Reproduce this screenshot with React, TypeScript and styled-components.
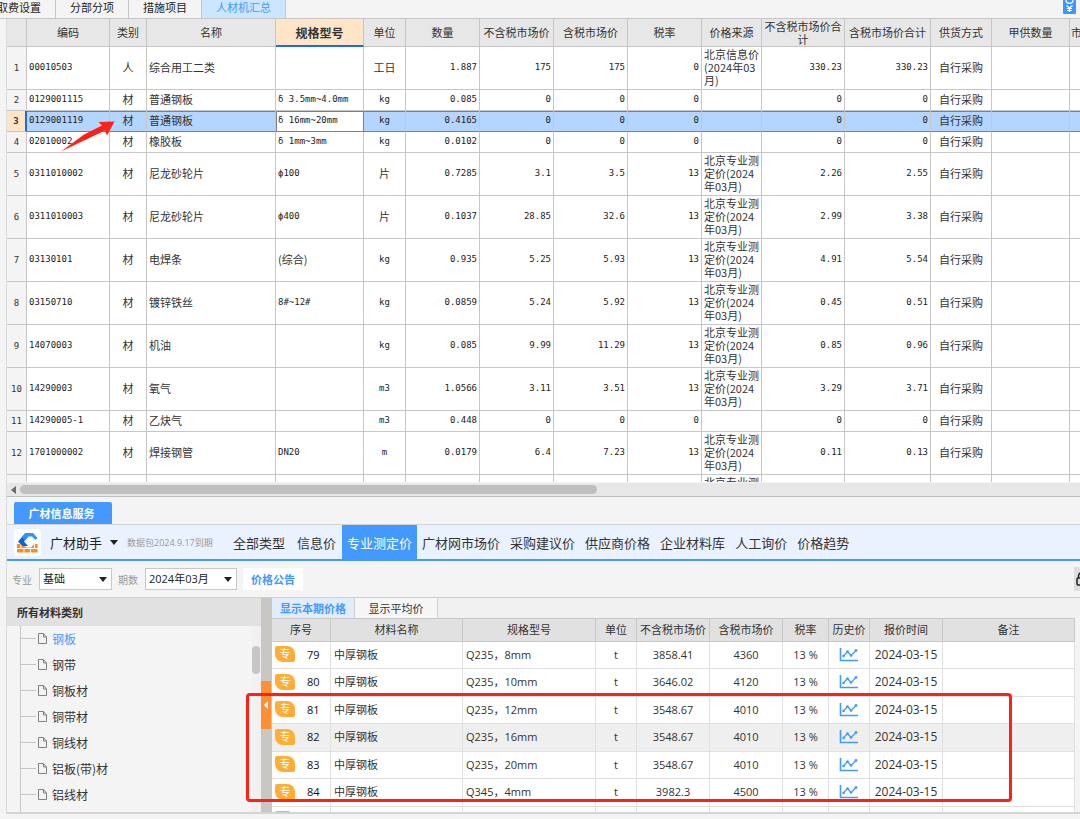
import React from 'react';
import styled, { createGlobalStyle, css } from 'styled-components';

const blue = '#4499ff';
const line = '#c6c6c6';
const song = '"Noto Sans CJK SC", sans-serif';
const ui = '"Open Sans", "Noto Sans CJK SC", sans-serif';

const GlobalStyle = createGlobalStyle`
  * { box-sizing: border-box; }
  html, body { margin: 0; background: #f4f4f4; }
  body { font-family: ${song}; font-size: 11px; line-height: 13px; color: #333; }
  button, select { font: inherit; color: inherit; margin: 0; }
  svg { flex: none; }
  table { border-collapse: separate; border-spacing: 0; table-layout: fixed; width: 100%; }
`;

const Page = styled.div`
  position: relative;
  display: flex;
  flex-direction: column;
  height: 100vh;
  overflow: hidden;
`;

/* ---------- top tabs ---------- */

const TopTabs = styled.nav`
  display: flex;
  justify-content: space-between;
  flex: none;
  height: 19px;
  overflow: hidden;
  border-bottom: 1px solid ${line};
`;
const TabGroup = styled.div`
  display: flex;
  margin-left: -17px;
`;
const TopTab = styled.button<{ $active?: boolean }>`
  width: ${(p) => (p.$active ? 84 : 73)}px;
  padding: 0 0 4px;
  border: 0;
  border-right: 1px solid ${line};
  background: ${(p) => (p.$active ? '#cce6ff' : 'transparent')};
  color: ${(p) => (p.$active ? blue : '#222')};
  white-space: nowrap;
  line-height: 14px;
`;

/* ---------- material sheet ---------- */

const SheetPane = styled.section`
  flex: none;
  margin-left: 6px;
  border-left: 1px solid #dcdcdc;
  border-bottom: 1px solid #bdbdbd;
`;
const SheetView = styled.div`
  height: 463px;
  overflow: hidden;
  background: #fff;
`;
const Head = styled.th<{ $current?: boolean; $left?: boolean }>`
  height: 28px;
  padding: 0 1px;
  border-right: 1px solid ${line};
  border-bottom: 1px solid ${line};
  background: #e7e7e7;
  font-weight: 400;
  line-height: 13px;
  overflow: hidden;
  text-align: ${(p) => (p.$left ? 'left' : 'center')};
  ${(p) =>
    p.$current &&
    css`
      background: #ffe5c8;
      border-bottom: 2px solid #1a6be8;
      font-weight: 700;
      font-size: 12px;
    `}
  &:last-child { border-right: 0; }
`;
const SheetRow = styled.tr<{ $tall?: boolean; $selected?: boolean }>`
  height: ${(p) => (p.$tall ? 43 : 21)}px;
  ${(p) =>
    p.$selected &&
    css`
      td {
        background: #b3d5ff;
        border-bottom-color: #7f7f7f;
        box-shadow: inset 0 1px #7f7f7f;
      }
    `}
`;
const Cell = styled.td<{ $align?: 'left' | 'center' | 'right'; $num?: boolean }>`
  padding: 0 2px 2px;
  border-right: 1px solid ${line};
  border-bottom: 1px solid ${line};
  text-align: ${(p) => p.$align ?? 'left'};
  white-space: nowrap;
  ${(p) =>
    p.$num &&
    css`
      font-family: "DejaVu Sans Mono", ${song};
      font-size: 9px;
      color: #222;
    `}
  &:last-child { border-right: 0; }
`;
const RowNo = styled.th<{ $selected?: boolean }>`
  padding: 0;
  border-right: 1px solid ${line};
  border-bottom: 1px solid ${line};
  background: #f4f4f4;
  font-family: "DejaVu Sans Mono", monospace;
  font-size: 9px;
  font-weight: 400;
  text-align: center;
  ${(p) =>
    p.$selected &&
    css`
      background: #ffe5c8;
      border-right: 2px solid #1a6be8;
      font-weight: 700;
    `}
`;
const SpecCell = styled(Cell)<{ $selected?: boolean }>`
  ${(p) =>
    p.$selected &&
    css`
      && {
        background: #fff;
        border-right-color: #7f7f7f;
        box-shadow: inset 1px 1px #7f7f7f;
      }
    `}
`;
const ScrollBar = styled.div`
  display: flex;
  align-items: center;
  gap: 4px;
  height: 14px;
  padding-left: 4px;
  border-top: 1px solid #f4f4f4;
  background: #e7e7e7;
`;
const ScrollThumb = styled.div`
  width: 54%;
  height: 9px;
  border-radius: 5px;
  background: #bfbfbf;
`;

/* ---------- service panel ---------- */

const Service = styled.section`
  flex: 1;
  min-height: 0;
  display: flex;
  flex-direction: column;
  margin-left: 6px;
  border-left: 1px solid #dcdcdc;
`;
const ServiceTabs = styled.div`
  flex: none;
  padding: 5px 7px 0;
  height: 28px;
  border-bottom: 1px solid #d2d2d2;
`;
const ServiceTab = styled.button`
  width: 98px;
  height: 22px;
  padding: 0 3px 0 0;
  border: 0;
  border-radius: 2px 2px 0 0;
  background: ${blue};
  color: #fff;
  font-weight: 700;
`;
const Toolbar = styled.div`
  flex: none;
  display: flex;
  align-items: center;
  height: 36px;
  padding-left: 7px;
  border-bottom: 2px solid ${blue};
  background: #eaf1ff;
  font-size: 13px;
  white-space: nowrap;
`;
const Logo = styled.span`
  display: flex;
  align-items: center;
  justify-content: center;
  width: 27px;
  height: 27px;
  border-radius: 4px;
  background: #fff;
`;
const Product = styled.button`
  display: flex;
  align-items: center;
  gap: 8px;
  padding: 0;
  margin-left: 9px;
  border: 0;
  background: none;
  color: #222;
`;
const Expiry = styled.span`
  width: 100px;
  margin-left: 9px;
  font-family: ${ui};
  font-size: 9px;
  color: #9a9a9a;
`;
const Nav = styled.nav`
  display: flex;
  align-self: stretch;
`;
const NavItem = styled.button<{ $active?: boolean; $wide?: boolean }>`
  padding: 0 ${(p) => (p.$wide ? 6 : 5)}px;
  border: 0;
  background: ${(p) => (p.$active ? blue : 'none')};
  color: ${(p) => (p.$active ? '#fff' : '#333')};
`;
const Filters = styled.div`
  flex: none;
  display: flex;
  align-items: center;
  height: 36px;
  padding-left: 5px;
`;
const FieldLabel = styled.label`
  width: 27px;
  font-size: 10px;
  color: #999;
`;
const SelectWrap = styled.span<{ $w: number }>`
  display: flex;
  align-items: center;
  width: ${(p) => p.$w}px;
  height: 22px;
  margin-right: 6px;
  padding-right: 4px;
  border: 1px solid #c8c8c8;
  background: #fff;
  select {
    flex: 1;
    min-width: 0;
    appearance: none;
    border: 0;
    padding: 0 0 0 3px;
    background: none;
    font-family: ${ui};
    line-height: 16px;
    color: #222;
  }
`;
const Notice = styled.button`
  width: 60px;
  height: 22px;
  padding: 0;
  border: 0;
  background: #fff;
  color: ${blue};
  font-weight: 700;
`;
const LockButton = styled.button`
  display: flex;
  align-items: center;
  width: 6px;
  height: 24px;
  margin-left: auto;
  padding: 0 0 0 2px;
  border: 0;
  background: #dedede;
  overflow: hidden;
`;

const Split = styled.div`
  flex: 1;
  min-height: 0;
  display: flex;
  border-top: 1px solid #cfcfcf;
  border-bottom: 2px solid #d4d4d4;
`;
const Tree = styled.aside`
  flex: none;
  width: 254px;
  display: flex;
  flex-direction: column;
  overflow: hidden;
`;
const TreeTitle = styled.h2`
  flex: none;
  height: 28px;
  margin: 0;
  padding-left: 10px;
  background: #e1e1e1;
  font-size: 11px;
  line-height: 28px;
`;
const TreeBody = styled.div`
  flex: 1;
  min-height: 0;
  display: flex;
  justify-content: space-between;
`;
const TreeList = styled.ul`
  margin: 0 0 0 13px;
  padding: 0;
  border-left: 1px solid ${line};
  list-style: none;
`;
const TreeItem = styled.li<{ $active?: boolean }>`
  display: flex;
  align-items: center;
  height: 26px;
  padding-bottom: 1px;
  font-size: 12px;
  white-space: nowrap;
  color: ${(p) => (p.$active ? blue : '#333')};
  &::before {
    content: "";
    width: 15px;
    margin-right: 1px;
    border-top: 1px solid ${line};
  }
  svg { margin-right: 4px; }
`;
const TreeScroll = styled.div`
  width: 9px;
  padding-top: 20px;
  background: #f1f1f1;
  &::before {
    content: "";
    display: block;
    width: 8px;
    height: 28px;
    border-radius: 4px;
    background: #c6c6c6;
  }
`;
const Splitter = styled.div`
  flex: none;
  width: 11px;
  padding-top: 83px;
  background: #c9c7c4;
`;
const Collapse = styled.button`
  display: flex;
  align-items: center;
  justify-content: center;
  width: 10px;
  height: 48px;
  padding: 0;
  border: 0;
  background: #ff8f33;
`;
const Prices = styled.div`
  flex: 1;
  min-width: 0;
  padding-right: 5px;
  overflow: hidden;
  font-family: ${ui};
`;
const PriceTabs = styled.div`
  display: flex;
  height: 20px;
  margin-right: -5px;
  background: #f0f0f0;
`;
const PriceTab = styled.button<{ $active?: boolean }>`
  width: 83px;
  padding: 0;
  border: 0;
  border-right: 1px solid #d0d0d0;
  background: ${(p) => (p.$active ? '#e1edfd' : '#f6f6f6')};
  color: ${(p) => (p.$active ? blue : '#333')};
  font-weight: ${(p) => (p.$active ? 700 : 400)};
`;
const PriceHead = styled.th`
  height: 24px;
  padding: 0 0 2px;
  border: solid #c8c8c8;
  border-width: 1px 1px 1px 0;
  background: #e1e1e1;
  font-weight: 400;
  white-space: nowrap;
`;
const PriceRow = styled.tr<{ $hover?: boolean }>`
  height: 27px;
  background: ${(p) => (p.$hover ? '#efefef' : '#fff')};
  &:nth-child(even) { height: 28px; }
`;
const PriceCell = styled.td<{ $left?: boolean; $date?: boolean }>`
  padding: 0 3px 2px;
  border-right: 1px solid #e0e0e0;
  border-bottom: 1px solid #e0e0e0;
  text-align: ${(p) => (p.$left ? 'left' : 'center')};
  font-size: ${(p) => (p.$date ? 12 : 11)}px;
  white-space: nowrap;
  svg { display: block; margin: 0 auto; }
`;
const Seq = styled.span`
  display: flex;
  align-items: center;
  gap: 12px;
  color: #111;
`;
const Badge = styled.span`
  width: 20px;
  height: 16px;
  border-radius: 2px 8px 2px 8px;
  background: #ffae35;
  color: #fff;
  font-size: 11px;
  line-height: 15px;
  text-align: center;
`;
const StatusBar = styled.footer`
  flex: none;
  height: 5px;
`;

/* ---------- annotations over the window ---------- */

const RedBox = styled.div`
  position: absolute;
  left: 246px;
  right: 68px;
  top: 693px;
  height: 109px;
  border: 3px solid #ff2115;
  border-radius: 4px;
  pointer-events: none;
`;
const RedArrow = styled.svg`
  position: absolute;
  left: 60px;
  top: 119px;
  pointer-events: none;
`;

/* ---------- drawings ---------- */

const Down = () => (
  <svg width="8" height="5" viewBox="0 0 8 5" aria-hidden="true"><path d="M0 0h8L4 5z" fill="#222" /></svg>
);
const FileIcon = () => (
  <svg width="11" height="13" viewBox="0 0 11 13" fill="none" stroke="#808080" aria-hidden="true">
    <path d="M1.500 1.500h5l3 3.500v6.500h-8z" /><path d="M6.500 1.500V5h3" />
  </svg>
);
const ChartIcon = () => (
  <svg width="20" height="15" viewBox="0 0 20 15" fill="none" stroke={blue} aria-hidden="true">
    <path d="M1.500 1v12.500H19" strokeWidth="1.600" />
    <path d="M4.500 9L8.500 4.500 12 8.500 17 3.500" strokeWidth="1.300" />
    <g fill={blue} stroke="none">
      <circle cx="4.500" cy="9" r="1.300" /><circle cx="8.500" cy="4.500" r="1.300" />
      <circle cx="12" cy="8.500" r="1.300" /><circle cx="17" cy="3.500" r="1.400" />
    </g>
  </svg>
);
const LogoIcon = () => (
  <svg width="23" height="23" viewBox="0 0 23 23" aria-hidden="true">
    <path d="M1 13h20.500v8.500H1z" fill="#ff8a1e" />
    <path d="M1 17.500h21M8 17v5M14.500 17v5M5 13v4M18.500 13v4" stroke="#fff" />
    <path d="M6 12h13l-4 4.500h-5z" fill="#fff" />
    <path d="M2 10.500L9.500 2h5L8 10.500l4 4.500H6.500z" fill="#0d62d8" />
    <path d="M9.500 2H17l4.500 5-2 2L16 5.500h-3.500l-3 3.500-4-2.500z" fill="#2f92ff" />
  </svg>
);
const PriceIcon = () => (
  <svg width="17" height="14" viewBox="0 0 17 14" aria-hidden="true">
    <path d="M0 0h13v13a1 1 0 0 1-1 1H1a1 1 0 0 1-1-1z" fill="#3d96fb" />
    <path d="M3 0c0 4.500 7 4.500 7 0M3.500 5.500l3 2.500 3-2.500M6.500 8v4M4 8.500h5M4 10.500h5" fill="none" stroke="#fff" strokeWidth="1.200" />
  </svg>
);

/* ---------- data ---------- */

const sheetCols = [20, 83, 37, 129, 88, 42, 74, 74, 74, 74, 60, 83, 86, 61, 78];
const sheetHeads = ['', '编码', '类别', '名称', '规格型号', '单位', '数量', '不含税市场价', '含税市场价', '税率', '价格来源', '不含税市场价合计', '含税市场价合计', '供货方式', '甲供数量'];
const info = ['北京信息价', '(2024年03', '月)'];
const survey = ['北京专业测', '定价(2024', '年03月)'];
type Item = [string, string, string, string, string, string, string, string, string, string[], string, string];
const items: Item[] = [
  ['00010503', '人', '综合用工二类', '', '工日', '1.887', '175', '175', '0', info, '330.23', '330.23'],
  ['0129001115', '材', '普通钢板', 'δ 3.5mm~4.0mm', 'kg', '0.085', '0', '0', '0', [], '0', '0'],
  ['0129001119', '材', '普通钢板', 'δ 16mm~20mm', 'kg', '0.4165', '0', '0', '0', [], '0', '0'],
  ['02010002', '材', '橡胶板', 'δ 1mm~3mm', 'kg', '0.0102', '0', '0', '0', [], '0', '0'],
  ['0311010002', '材', '尼龙砂轮片', 'ф100', '片', '0.7285', '3.1', '3.5', '13', survey, '2.26', '2.55'],
  ['0311010003', '材', '尼龙砂轮片', 'ф400', '片', '0.1037', '28.85', '32.6', '13', survey, '2.99', '3.38'],
  ['03130101', '材', '电焊条', '(综合)', 'kg', '0.935', '5.25', '5.93', '13', survey, '4.91', '5.54'],
  ['03150710', '材', '镀锌铁丝', '8#~12#', 'kg', '0.0859', '5.24', '5.92', '13', survey, '0.45', '0.51'],
  ['14070003', '材', '机油', '', 'kg', '0.085', '9.99', '11.29', '13', survey, '0.85', '0.96'],
  ['14290003', '材', '氧气', '', 'm3', '1.0566', '3.11', '3.51', '13', survey, '3.29', '3.71'],
  ['14290005-1', '材', '乙炔气', '', 'm3', '0.448', '0', '0', '0', [], '0', '0'],
  ['1701000002', '材', '焊接钢管', 'DN20', 'm', '0.0179', '6.4', '7.23', '13', survey, '0.11', '0.13'],
];
const navItems = ['全部类型', '信息价', '专业测定价', '广材网市场价', '采购建议价', '供应商价格', '企业材料库', '人工询价', '价格趋势'];
const tree = ['钢板', '钢带', '铜板材', '铜带材', '铜线材', '铝板(带)材', '铝线材'];
const priceCols = [59, 132, 133, 41, 73, 73, 46, 41, 73];
const priceHeads = ['序号', '材料名称', '规格型号', '单位', '不含税市场价', '含税市场价', '税率', '历史价', '报价时间', '备注'];
const prices = [
  ['79', 'Q235，8mm', '3858.41', '4360'],
  ['80', 'Q235，10mm', '3646.02', '4120'],
  ['81', 'Q235，12mm', '3548.67', '4010'],
  ['82', 'Q235，16mm', '3548.67', '4010'],
  ['83', 'Q235，20mm', '3548.67', '4010'],
  ['84', 'Q345，4mm', '3982.3', '4500'],
];

const Cols = ({ widths }: { widths: number[] }) => (
  <colgroup>
    {widths.map((w, i) => <col key={i} width={w} />)}
    <col />
  </colgroup>
);

const Lines = ({ text }: { text: string[] }) => (
  <>{text.map((t) => <React.Fragment key={t}>{t}<br /></React.Fragment>)}</>
);

const isHan = (s: string) => /[\u4e00-\u9fff]/.test(s);

export default function App() {
  return (
    <Page>
      <GlobalStyle />
      <TopTabs>
        <TabGroup>
          <TopTab>取费设置</TopTab>
          <TopTab>分部分项</TopTab>
          <TopTab>措施项目</TopTab>
          <TopTab $active>人材机汇总</TopTab>
        </TabGroup>
        <PriceIcon />
      </TopTabs>

      <SheetPane>
        <SheetView>
          <table>
            <Cols widths={sheetCols} />
            <thead>
              <tr>
                {sheetHeads.map((h) => <Head key={h} $current={h === '规格型号'}>{h}</Head>)}
                <Head $left>市</Head>
              </tr>
            </thead>
            <tbody>
              {items.map((r, i) => {
                const selected = i === 2;
                return (
                  <SheetRow key={r[0]} $tall={r[9].length > 0} $selected={selected}>
                    <RowNo $selected={selected}>{i + 1}</RowNo>
                    <Cell $num>{r[0]}</Cell>
                    <Cell $align="center">{r[1]}</Cell>
                    <Cell>{r[2]}</Cell>
                    <SpecCell $num={!isHan(r[3])} $selected={selected}>{r[3]}</SpecCell>
                    <Cell $align="center" $num={!isHan(r[4])}>{r[4]}</Cell>
                    <Cell $align="right" $num>{r[5]}</Cell>
                    <Cell $align="right" $num>{r[6]}</Cell>
                    <Cell $align="right" $num>{r[7]}</Cell>
                    <Cell $align="right" $num>{r[8]}</Cell>
                    <Cell><Lines text={r[9]} /></Cell>
                    <Cell $align="right" $num>{r[10]}</Cell>
                    <Cell $align="right" $num>{r[11]}</Cell>
                    <Cell $align="center">自行采购</Cell>
                    <Cell />
                    <Cell />
                  </SheetRow>
                );
              })}
              <SheetRow $tall>
                <RowNo />
                {sheetCols.slice(1).map((_, i) => (
                  <Cell key={i}>{i === 9 && <Lines text={survey} />}</Cell>
                ))}
                <Cell />
              </SheetRow>
            </tbody>
          </table>
        </SheetView>
        <ScrollBar>
          <svg width="5" height="8" viewBox="0 0 5 8" aria-hidden="true"><path d="M5 0v8L0 4z" fill="#6a6a6a" /></svg>
          <ScrollThumb />
        </ScrollBar>
      </SheetPane>

      <Service>
        <ServiceTabs><ServiceTab>广材信息服务</ServiceTab></ServiceTabs>
        <Toolbar>
          <Logo><LogoIcon /></Logo>
          <Product>广材助手<Down /></Product>
          <Expiry>数据包2024.9.17到期</Expiry>
          <Nav>
            {navItems.map((n, i) => (
              <NavItem key={n} $active={i === 2} $wide={i < 2}>{n}</NavItem>
            ))}
          </Nav>
        </Toolbar>
        <Filters>
          <FieldLabel htmlFor="major">专业</FieldLabel>
          <SelectWrap $w={73}>
            <select id="major"><option>基础</option></select><Down />
          </SelectWrap>
          <FieldLabel htmlFor="period">期数</FieldLabel>
          <SelectWrap $w={92}>
            <select id="period"><option>2024年03月</option></select><Down />
          </SelectWrap>
          <Notice>价格公告</Notice>
          <LockButton aria-label="锁定">
            <svg width="12" height="14" viewBox="0 0 12 14" fill="none" stroke="#222" strokeWidth="1.500" aria-hidden="true">
              <rect x="1" y="6" width="10" height="7" rx="1" /><path d="M2.500 6V4a3.500 3.500 0 0 1 7 0v2" />
            </svg>
          </LockButton>
        </Filters>
        <Split>
          <Tree>
            <TreeTitle>所有材料类别</TreeTitle>
            <TreeBody>
              <TreeList>
                {tree.map((t, i) => <TreeItem key={t} $active={i === 0}><FileIcon />{t}</TreeItem>)}
              </TreeList>
              <TreeScroll />
            </TreeBody>
          </Tree>
          <Splitter>
            <Collapse aria-label="收起">
              <svg width="4" height="8" viewBox="0 0 4 8" aria-hidden="true"><path d="M4 0v8L0 4z" fill="#fff" /></svg>
            </Collapse>
          </Splitter>
          <Prices>
            <PriceTabs>
              <PriceTab $active>显示本期价格</PriceTab>
              <PriceTab>显示平均价</PriceTab>
            </PriceTabs>
            <table>
              <Cols widths={priceCols} />
              <thead>
                <tr>{priceHeads.map((h) => <PriceHead key={h}>{h}</PriceHead>)}</tr>
              </thead>
              <tbody>
                {prices.map(([no, spec, net, gross]) => (
                  <PriceRow key={no} $hover={no === '82'}>
                    <PriceCell $left><Seq><Badge>专</Badge>{no}</Seq></PriceCell>
                    <PriceCell $left>中厚钢板</PriceCell>
                    <PriceCell $left>{spec}</PriceCell>
                    <PriceCell>t</PriceCell>
                    <PriceCell>{net}</PriceCell>
                    <PriceCell>{gross}</PriceCell>
                    <PriceCell>13 %</PriceCell>
                    <PriceCell><ChartIcon /></PriceCell>
                    <PriceCell $date>2024-03-15</PriceCell>
                    <PriceCell />
                  </PriceRow>
                ))}
                <PriceRow>
                  <PriceCell><Seq><Badge /></Seq></PriceCell>
                  {priceCols.map((_, i) => <PriceCell key={i} />)}
                </PriceRow>
              </tbody>
            </table>
          </Prices>
        </Split>
      </Service>
      <StatusBar />

      <RedArrow width="56" height="33" viewBox="0 0 56 33" aria-hidden="true">
        <path d="M1 32.500L24 15.500 42 6.500 38.500 3 54.500 2.500 47 16.500 45 11.500 24 21.500Z" fill="#ff2115" />
      </RedArrow>
      <RedBox />
    </Page>
  );
}
